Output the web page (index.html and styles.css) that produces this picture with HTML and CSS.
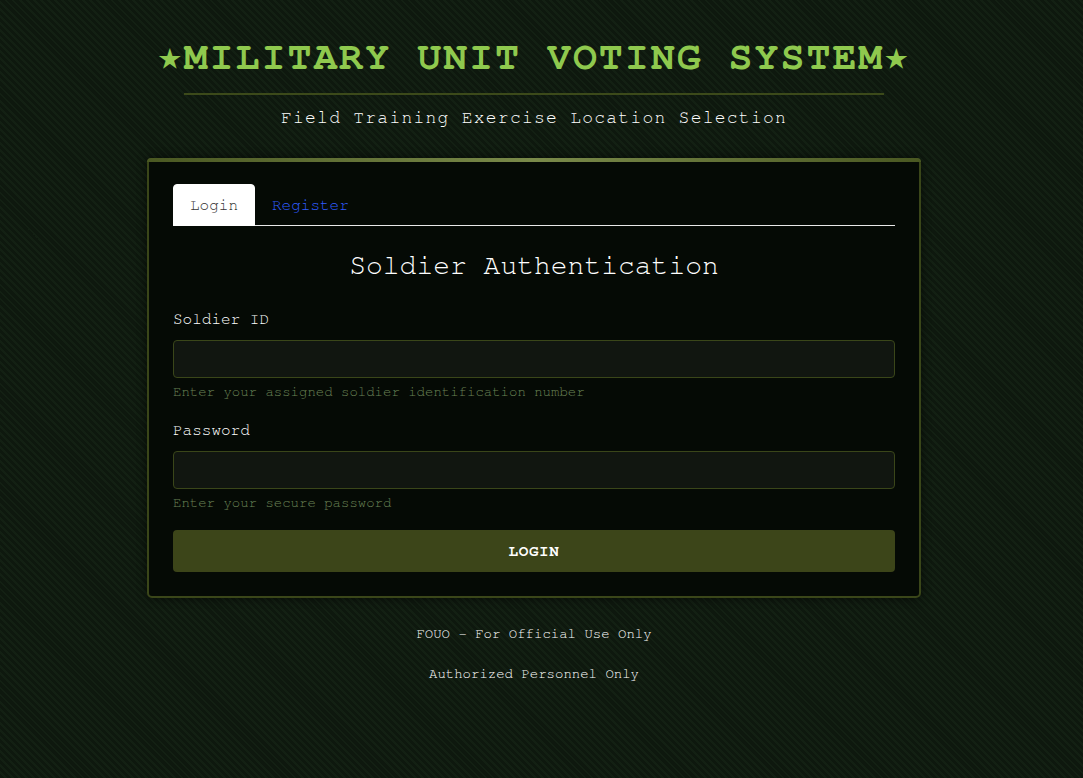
FILE: index.html
```html
<!DOCTYPE html>
<html lang="en">
<head>
<meta charset="utf-8">
<title>Military Unit Voting System</title>
<link rel="stylesheet" href="styles.css">
</head>
<body>
<div class="page">
  <header class="header">
    <h1 class="title">★MILITARY UNIT VOTING SYSTEM★</h1>
    <div class="divider"></div>
    <p class="subtitle">Field Training Exercise Location Selection</p>
  </header>

  <main class="card">
    <nav class="tabs">
      <a class="tab active">Login</a>
      <a class="tab">Register</a>
    </nav>
    <h2 class="card-title">Soldier Authentication</h2>
    <form class="form">
      <div class="field">
        <label class="label">Soldier ID</label>
        <input class="input" type="text">
        <div class="help">Enter your assigned soldier identification number</div>
      </div>
      <div class="field last">
        <label class="label">Password</label>
        <input class="input" type="password">
        <div class="help">Enter your secure password</div>
      </div>
      <button class="btn" type="button">LOGIN</button>
    </form>
  </main>

  <footer class="footer">
    <p>FOUO - For Official Use Only</p>
    <p>Authorized Personnel Only</p>
  </footer>
</div>
</body>
</html>
```

FILE: styles.css
```css
html, body {
  margin: 0;
  padding: 0;
}
body {
  min-height: 778px;
  background-color: #0f1a0f;
  background-image: repeating-linear-gradient(45deg, #0e180e 0px, #0e180e 3px, #132013 3px, #132013 5px);
  font-family: "Nimbus Mono PS", "Nimbus Mono L", "FreeMono", "Courier New", "Liberation Mono", monospace;
  color: #ffffff;
  padding-right: 15px;
  box-sizing: border-box;
}
.page {
  width: 774px;
  margin: 0 auto;
  padding-top: 36px;
}
.header {
  text-align: center;
}
.title {
  margin: 0;
  font-size: 40px;
  font-weight: bold;
  letter-spacing: 1.95px;
  color: #8fc94e;
  line-height: 42px;
  white-space: nowrap;
}
.divider {
  margin: 15px 37px 0;
  height: 2px;
  background: #3c4a1a;
}
.subtitle {
  margin: 11px 0 0;
  font-size: 18px;
  letter-spacing: 1.25px;
  line-height: 24px;
  color: #ffffff;
}
.card {
  position: relative;
  margin-top: 28px;
  background: #050a05;
  border: 2px solid #3a4619;
  border-radius: 5px;
  padding: 24px;
  box-shadow: 0 0 10px rgba(0,0,0,0.6);
}
.card::before {
  content: "";
  position: absolute;
  left: -2px;
  right: -2px;
  top: -2px;
  height: 4px;
  border-radius: 5px 5px 0 0;
  background: linear-gradient(90deg, #4a5822 0%, #7a8a4a 50%, #4a5822 100%);
}
.tabs {
  display: flex;
  border-bottom: 1px solid #e8e8e8;
}
.tab {
  display: block;
  padding: 8px 16px;
  font-size: 16px;
  line-height: 24px;
  color: #2f5cff;
  border: 1px solid transparent;
  border-radius: 4px 4px 0 0;
  margin-bottom: -1px;
  cursor: pointer;
}
.tab.active {
  background: #ffffff;
  color: #333;
  border-color: #ffffff;
}
.card-title {
  margin: 23px 0 24px;
  text-align: center;
  font-size: 28px;
  font-weight: normal;
  line-height: 34px;
  color: #ffffff;
}
.form {
  display: flex;
  flex-direction: column;
}
.field {
  display: flex;
  flex-direction: column;
  margin-bottom: 15px;
}
.field.last {
  margin-bottom: 16px;
}
.label {
  font-size: 16px;
  line-height: 24px;
  margin-bottom: 9px;
  color: #ffffff;
}
.input {
  height: 38px;
  box-sizing: border-box;
  background: #111610;
  border: 1px solid #3a4619;
  border-radius: 4px;
  color: #e8e8e8;
  font-family: inherit;
  font-size: 16px;
  padding: 6px 12px;
}
.help {
  margin-top: 4px;
  font-size: 14px;
  line-height: 21px;
  color: #6b8455;
}
.btn {
  height: 42px;
  background: #3c4519;
  border: none;
  border-radius: 4px;
  color: #ffffff;
  font-family: inherit;
  font-size: 16px;
  font-weight: bold;
  letter-spacing: 0.6px;
}
.footer {
  text-align: center;
  margin-top: 26px;
  font-size: 14px;
  line-height: 21px;
  color: #ffffff;
}
.footer p {
  margin: 0 0 19px;
}
```
